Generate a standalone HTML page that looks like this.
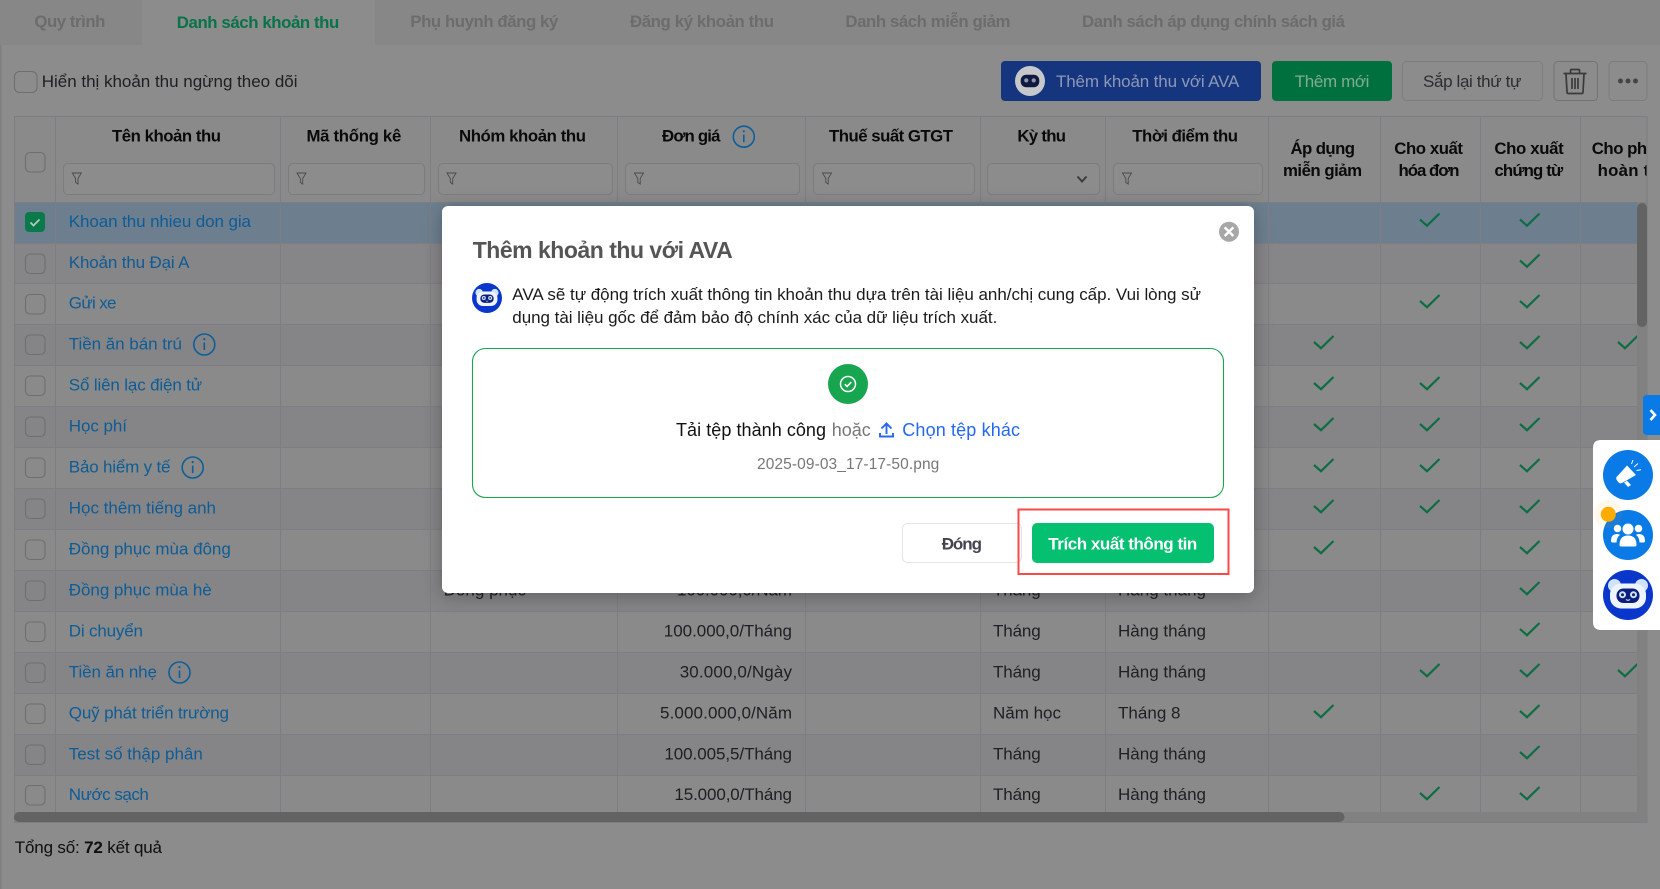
<!DOCTYPE html>
<html lang="vi">
<head>
<meta charset="utf-8">
<title>Danh sách khoản thu</title>
<style>
html,body{margin:0;padding:0;background:#8c8c8c;overflow:hidden}
svg{display:block}
text{font-family:"Liberation Sans","DejaVu Sans",sans-serif;font-size:17px;white-space:pre}
.tab{font-size:16.8px;font-weight:700;fill:#6c6c6c}
.h{font-size:16.8px;font-weight:700;fill:#0a0a0b}
.l{fill:#0e5c96}
.t{fill:#1f1f22}
.m{font-size:17px;fill:#1a1a1a}
.b{font-size:18px}
.grid rect{shape-rendering:crispEdges}
.in{fill:#8c8c8c;stroke:#7c7c7c}
.cb{fill:none;stroke:#6f6f70;stroke-width:1.1}
</style>
</head>
<body>
<svg width="1660" height="889" viewBox="0 0 1660 889">
<defs>
<g id="k"><path d="M-10 0l7 6.2L9.5-6" fill="none" stroke="#0c6e42" stroke-width="2.2"/></g>
<g id="cb"><rect x="0.5" y="0.5" width="19.5" height="19.5" rx="4.5" class="cb"/></g>
<g id="f"><path d="M-4.500-5.500h9l-3.300 5.500v5.500l-2.400-1.600v-3.900z" fill="none" stroke="#4a4a4a" stroke-width=".9"/></g>
<g id="i"><circle r="10.5" fill="none" stroke="#0c5f98" stroke-width="1.6"/><path d="M0-2v7.500" stroke="#0c5f98" stroke-width="1.600"/><circle cy="-5.400" r="1.100" fill="#0c5f98"/></g>
<g id="face">
<circle cx="-13.500" cy="-10" r="6.500" fill="#cfe3fb"/><circle cx="13.500" cy="-10" r="6.500" fill="#cfe3fb"/>
<rect x="-18" y="-12" width="36" height="25" rx="11" fill="#eef4fd"/>
<rect x="-11.500" y="-7" width="23" height="14.500" rx="7" fill="#0a1f7c"/>
<circle cx="-5.500" cy="-.8" r="3.500" fill="#cfe0f5"/><circle cx="5.500" cy="-.8" r="3.500" fill="#cfe0f5"/>
<circle cx="-5.500" cy="-.8" r="1.500" fill="#14246e"/><circle cx="5.500" cy="-.8" r="1.500" fill="#14246e"/>
<path d="M-2 4q2 1.500 4 0" stroke="#fff" fill="none"/>
</g>
<clipPath id="tc"><path d="M14 116H1647V202H1637V812H14Z"/></clipPath>
</defs>

<!-- page -->
<rect width="1660" height="889" fill="#8c8c8c"/>
<rect width="1.500" height="889" fill="#7f7f7f"/>
<rect width="1660" height="45" fill="#878787"/>
<rect x="142" width="233" height="45" fill="#8c8c8c"/>
<text class="tab" x="34.400" y="27" textLength="71">Quy trình</text>
<text class="tab" x="176.800" y="28" textLength="162.500" style="fill:#08734a">Danh sách khoản thu</text>
<text class="tab" x="410.300" y="27" textLength="148">Phụ huynh đăng ký</text>
<text class="tab" x="630" y="27" textLength="144">Đăng ký khoản thu</text>
<text class="tab" x="845.400" y="27" textLength="165">Danh sách miễn giảm</text>
<text class="tab" x="1082" y="27" textLength="263">Danh sách áp dụng chính sách giá</text>

<!-- toolbar -->
<rect x="14.500" y="71.500" width="22.500" height="21" rx="5" class="cb"/>
<text class="t" x="41.800" y="87" textLength="255.700">Hiển thị khoản thu ngừng theo dõi</text>
<rect x="1001" y="61" width="260" height="40" rx="4" fill="#15357f"/>
<circle cx="1030" cy="81" r="15" fill="#c6c8cb"/>
<g transform="translate(1030 81) scale(.62)"><rect x="-15" y="-10" width="30" height="20" rx="9" fill="#0f1a3e"/><circle cx="-6" cy="-1" r="3.400" fill="#8e97b0"/><circle cx="6" cy="-1" r="3.400" fill="#8e97b0"/></g>
<text x="1056" y="87" textLength="183.300" style="fill:#8d98b6">Thêm khoản thu với AVA</text>
<rect x="1272" y="61" width="120" height="40" rx="4" fill="#00703f"/>
<text x="1294.800" y="87" textLength="74.600" style="fill:#80ab96">Thêm mới</text>
<rect x="1402.500" y="61.500" width="140" height="39" rx="4" fill="#8c8c8c" stroke="#7d7d7d"/>
<text x="1423" y="87" textLength="98.400" style="fill:#2c2c32">Sắp lại thứ tự</text>
<rect x="1554" y="61.500" width="43.500" height="39" rx="4" fill="#8c8c8c" stroke="#737373"/>
<path d="M1563.500 73.500h23M1570.500 73v-2.500q0-1 1-1h7q1 0 1 1V73M1566 74l1 18q0 1.500 1.500 1.500h13q1.500 0 1.500-1.500l1-18M1572 78v11M1575 78v11M1578 78v11" fill="none" stroke="#3a3a3a" stroke-width="1.700"/>
<rect x="1609" y="61.500" width="38" height="39" rx="4" fill="#8c8c8c" stroke="#7d7d7d"/>
<circle cx="1620.500" cy="81" r="2.500" fill="#44444a"/><circle cx="1628" cy="81" r="2.500" fill="#44444a"/><circle cx="1635.500" cy="81" r="2.500" fill="#44444a"/>

<!-- table -->
<g clip-path="url(#tc)">
<g class="grid">
<rect x="14" y="116" width="1633" height="86" fill="#8a8a8a"/>
<rect x="14" y="202" width="1633" height="41" fill="#6d7f8e"/>
<rect x="14" y="243" width="1633" height="41" fill="#868587"/>
<rect x="14" y="284" width="1633" height="40" fill="#8a8a8a"/>
<rect x="14" y="324" width="1633" height="41" fill="#858588"/>
<rect x="14" y="365" width="1633" height="41" fill="#8a8a8a"/>
<rect x="14" y="406" width="1633" height="41" fill="#858588"/>
<rect x="14" y="447" width="1633" height="41" fill="#8a8a8a"/>
<rect x="14" y="488" width="1633" height="41" fill="#858588"/>
<rect x="14" y="529" width="1633" height="41" fill="#8a8a8a"/>
<rect x="14" y="570" width="1633" height="41" fill="#858588"/>
<rect x="14" y="611" width="1633" height="41" fill="#8a8a8a"/>
<rect x="14" y="652" width="1633" height="41" fill="#858588"/>
<rect x="14" y="693" width="1633" height="41" fill="#8a8a8a"/>
<rect x="14" y="734" width="1633" height="41" fill="#858588"/>
<rect x="14" y="775" width="1633" height="37" fill="#8a8a8a"/>
<g fill="#7d7d85">
<rect x="14" y="202" width="1633" height="1"/><rect x="14" y="243" width="1633" height="1"/><rect x="14" y="283" width="1633" height="1"/><rect x="14" y="324" width="1633" height="1"/><rect x="14" y="365" width="1633" height="1"/><rect x="14" y="406" width="1633" height="1"/><rect x="14" y="447" width="1633" height="1"/><rect x="14" y="488" width="1633" height="1"/><rect x="14" y="529" width="1633" height="1"/><rect x="14" y="570" width="1633" height="1"/><rect x="14" y="611" width="1633" height="1"/><rect x="14" y="652" width="1633" height="1"/><rect x="14" y="693" width="1633" height="1"/><rect x="14" y="734" width="1633" height="1"/><rect x="14" y="775" width="1633" height="1"/>
<rect x="55" y="116" width="1" height="696"/><rect x="280" y="116" width="1" height="696"/><rect x="430" y="116" width="1" height="696"/><rect x="617" y="116" width="1" height="696"/><rect x="805" y="116" width="1" height="696"/><rect x="980" y="116" width="1" height="696"/><rect x="1105" y="116" width="1" height="696"/><rect x="1268" y="116" width="1" height="696"/><rect x="1380" y="116" width="1" height="696"/><rect x="1480" y="116" width="1" height="696"/><rect x="1580" y="116" width="1" height="696"/>
</g>
</g>

<!-- header -->
<text class="h" x="112" y="141.500" textLength="109">Tên khoản thu</text>
<text class="h" x="306.500" y="141.500" textLength="94.800">Mã thống kê</text>
<text class="h" x="459" y="141.500" textLength="127">Nhóm khoản thu</text>
<text class="h" x="662" y="141.500" textLength="58.500">Đơn giá</text>
<use href="#i" x="743.800" y="136.700"/>
<text class="h" x="829" y="141.500" textLength="124">Thuế suất GTGT</text>
<text class="h" x="1017.400" y="141.500" textLength="48.600">Kỳ thu</text>
<text class="h" x="1132.300" y="141.500" textLength="105.700">Thời điểm thu</text>
<text class="h" x="1290.500" y="154" textLength="64.500">Áp dụng</text>
<text class="h" x="1283" y="176" textLength="79">miễn giảm</text>
<text class="h" x="1394.300" y="154" textLength="68.700">Cho xuất</text>
<text class="h" x="1398.500" y="176" textLength="61">hóa đơn</text>
<text class="h" x="1494.400" y="154" textLength="69.300">Cho xuất</text>
<text class="h" x="1494.400" y="176" textLength="68.800">chứng từ</text>
<text class="h" x="1591.800" y="154" textLength="74">Cho phép</text>
<text class="h" x="1597.600" y="176" textLength="68">hoàn trả</text>
<use href="#cb" x="25" y="152"/>

<rect class="in" x="63.500" y="163.500" width="211" height="31" rx="4.500"/>
<rect class="in" x="288.500" y="163.500" width="136" height="31" rx="4.500"/>
<rect class="in" x="438.500" y="163.500" width="174" height="31" rx="4.500"/>
<rect class="in" x="625.500" y="163.500" width="174" height="31" rx="4.500"/>
<rect class="in" x="813.500" y="163.500" width="161" height="31" rx="4.500"/>
<rect class="in" x="987.500" y="163.500" width="112" height="31" rx="4.500"/>
<rect class="in" x="1113.500" y="163.500" width="149" height="31" rx="4.500"/>
<use href="#f" x="76.800" y="178.500"/><use href="#f" x="301.500" y="178.500"/><use href="#f" x="451.500" y="178.500"/><use href="#f" x="639" y="178.500"/><use href="#f" x="827" y="178.500"/><use href="#f" x="1127" y="178.500"/>
<path d="M1077.500 176.500l4.500 5 4.500-5" fill="none" stroke="#3c3c3f" stroke-width="2"/>

<!-- row checkboxes -->
<rect x="25" y="212" width="20" height="20" rx="4" fill="#0a7a4a"/>
<path d="M30.500 222.500l3 3 6-6" fill="none" stroke="#b9c9c0" stroke-width="1.700"/>
<use href="#cb" x="25" y="253.500"/><use href="#cb" x="25" y="294"/><use href="#cb" x="25" y="334.500"/><use href="#cb" x="25" y="375.500"/><use href="#cb" x="25" y="416.500"/><use href="#cb" x="25" y="457.500"/><use href="#cb" x="25" y="498.500"/><use href="#cb" x="25" y="539.500"/><use href="#cb" x="25" y="580.500"/><use href="#cb" x="25" y="621.500"/><use href="#cb" x="25" y="662.500"/><use href="#cb" x="25" y="703.500"/><use href="#cb" x="25" y="744.500"/><use href="#cb" x="25" y="785"/>

<!-- names -->
<text class="l" x="68.800" y="227" textLength="182.200">Khoan thu nhieu don gia</text>
<text class="l" x="68.800" y="268" textLength="120.700">Khoản thu Đại A</text>
<text class="l" x="68.800" y="308.500" textLength="47.700">Gửi xe</text>
<text class="l" x="68.800" y="349.500" textLength="113.200">Tiền ăn bán trú</text>
<use href="#i" x="204.300" y="344.500"/>
<text class="l" x="68.800" y="390.500" textLength="133.400">Sổ liên lạc điện tử</text>
<text class="l" x="68.800" y="431.500" textLength="58.200">Học phí</text>
<text class="l" x="68.800" y="472.500" textLength="101.700">Bảo hiểm y tế</text>
<use href="#i" x="192.700" y="467.500"/>
<text class="l" x="68.800" y="513.500" textLength="147.200">Học thêm tiếng anh</text>
<text class="l" x="68.800" y="554.500" textLength="162">Đồng phục mùa đông</text>
<text class="l" x="68.800" y="595.500" textLength="142.900">Đồng phục mùa hè</text>
<text class="l" x="68.800" y="636.500" textLength="74.200">Di chuyển</text>
<text class="l" x="68.800" y="677.500" textLength="88.200">Tiền ăn nhẹ</text>
<use href="#i" x="179.500" y="672.500"/>
<text class="l" x="68.800" y="718.500" textLength="160.200">Quỹ phát triển trường</text>
<text class="l" x="68.800" y="759.500" textLength="134">Test số thập phân</text>
<text class="l" x="68.800" y="800" textLength="80">Nước sạch</text>

<!-- values -->
<text class="t" x="443.600" y="595.500" textLength="82.400">Đồng phục</text>
<text class="t" x="677" y="595.500" textLength="115">100.000,0/Năm</text>
<text class="t" x="993" y="595.500" textLength="47.700">Tháng</text>
<text class="t" x="1118" y="595.500" textLength="88">Hàng tháng</text>
<text class="t" x="663.800" y="636.500" textLength="128.200">100.000,0/Tháng</text>
<text class="t" x="993" y="636.500" textLength="47.700">Tháng</text>
<text class="t" x="1118" y="636.500" textLength="88">Hàng tháng</text>
<text class="t" x="679.700" y="677.500" textLength="112.300">30.000,0/Ngày</text>
<text class="t" x="993" y="677.500" textLength="47.700">Tháng</text>
<text class="t" x="1118" y="677.500" textLength="88">Hàng tháng</text>
<text class="t" x="660" y="718.500" textLength="132">5.000.000,0/Năm</text>
<text class="t" x="993" y="718.500" textLength="68">Năm học</text>
<text class="t" x="1118" y="718.500" textLength="62.500">Tháng 8</text>
<text class="t" x="664.400" y="759.500" textLength="127.600">100.005,5/Tháng</text>
<text class="t" x="993" y="759.500" textLength="47.700">Tháng</text>
<text class="t" x="1118" y="759.500" textLength="88">Hàng tháng</text>
<text class="t" x="674.400" y="800" textLength="117.600">15.000,0/Tháng</text>
<text class="t" x="993" y="800" textLength="47.700">Tháng</text>
<text class="t" x="1118" y="800" textLength="88">Hàng tháng</text>

<!-- checks -->
<use href="#k" x="1430" y="219.500"/><use href="#k" x="1530" y="219.500"/>
<use href="#k" x="1530" y="260.500"/>
<use href="#k" x="1430" y="301"/><use href="#k" x="1530" y="301"/>
<use href="#k" x="1324" y="342"/><use href="#k" x="1530" y="342"/><use href="#k" x="1628" y="342"/>
<use href="#k" x="1324" y="383"/><use href="#k" x="1430" y="383"/><use href="#k" x="1530" y="383"/>
<use href="#k" x="1324" y="424"/><use href="#k" x="1430" y="424"/><use href="#k" x="1530" y="424"/>
<use href="#k" x="1324" y="465"/><use href="#k" x="1430" y="465"/><use href="#k" x="1530" y="465"/>
<use href="#k" x="1324" y="506"/><use href="#k" x="1430" y="506"/><use href="#k" x="1530" y="506"/>
<use href="#k" x="1324" y="547"/><use href="#k" x="1530" y="547"/>
<use href="#k" x="1530" y="588"/>
<use href="#k" x="1530" y="629"/>
<use href="#k" x="1430" y="670"/><use href="#k" x="1530" y="670"/><use href="#k" x="1628" y="670"/>
<use href="#k" x="1324" y="711"/><use href="#k" x="1530" y="711"/>
<use href="#k" x="1530" y="752"/>
<use href="#k" x="1430" y="793"/><use href="#k" x="1530" y="793"/>
</g>

<!-- table frame + scrollbars -->
<rect x="14.500" y="116.500" width="1632.500" height="706" fill="none" stroke="#7d7d82" style="shape-rendering:crispEdges"/>
<rect x="1637" y="202" width="10" height="610" fill="#818181"/>
<rect x="1637" y="203" width="10" height="124" rx="5" fill="#636363"/>
<rect x="14" y="812" width="1633" height="10" fill="#818181"/>
<rect x="14" y="812" width="1330.500" height="10" rx="5" fill="#636363"/>

<text class="t" x="14.800" y="853" style="fill:#0e0e0e" textLength="147.200">Tổng số: <tspan font-weight="700">72</tspan> kết quả</text>

<!-- modal -->
<rect x="442" y="206" width="812" height="387" rx="6" fill="#fff" style="filter:drop-shadow(0 3px 9px rgba(0,0,0,.28))"/>
<text x="472.700" y="258" textLength="260" style="font-size:23px;font-weight:700;fill:#555">Thêm khoản thu với AVA</text>
<circle cx="1229" cy="231.700" r="10" fill="#a7a7a7"/>
<path d="M1224.700 227.400l8.600 8.600m0-8.600l-8.600 8.600" stroke="#fff" stroke-width="2.400"/>

<circle cx="487" cy="298" r="15" fill="#0a36cc"/>
<use href="#face" transform="translate(487 298.500) scale(.58)"/>
<text class="m" x="512.300" y="300" textLength="688.700">AVA sẽ tự động trích xuất thông tin khoản thu dựa trên tài liệu anh/chị cung cấp. Vui lòng sử</text>
<text class="m" x="512.300" y="323" textLength="485">dụng tài liệu gốc để đảm bảo độ chính xác của dữ liệu trích xuất.</text>

<rect x="472.500" y="348.500" width="751" height="149" rx="13" fill="#fff" stroke="#1aa350" stroke-width="1.100"/>
<circle cx="848" cy="384" r="20" fill="#17a64f"/>
<circle cx="848" cy="384" r="7.500" fill="none" stroke="#fff" stroke-width="1.500"/>
<path d="M844.800 384.200l2.300 2.300 4.200-4.500" fill="none" stroke="#fff" stroke-width="1.600"/>
<text class="m b" x="676" y="436" textLength="150" style="fill:#111">Tải tệp thành công</text>
<text class="m b" x="831.700" y="436" textLength="39" style="fill:#777">hoặc</text>
<path d="M886.500 424v10M881.500 428.500l5-5 5 5M880 433v3.500h13V433" fill="none" stroke="#2468f0" stroke-width="1.900"/>
<text class="m b" x="902.300" y="436" textLength="117.700" style="fill:#2468f0">Chọn tệp khác</text>
<text x="757" y="469" textLength="182.300" style="font-size:15.500px;fill:#777">2025-09-03_17-17-50.png</text>

<rect x="902.500" y="523.500" width="119" height="39" rx="5" fill="#fff" stroke="#e5e5e8"/>
<text x="941.700" y="549.500" textLength="40.300" style="font-weight:700;fill:#44444f">Đóng</text>
<rect x="1032" y="523" width="182" height="40" rx="5" fill="#04c070"/>
<text x="1048.300" y="549.500" textLength="149" style="font-weight:700;fill:#fff">Trích xuất thông tin</text>
<rect x="1018.500" y="509.500" width="210" height="64.500" fill="none" stroke="#f94a4a" stroke-width="2"/>

<!-- side widgets -->
<path d="M1660 395h-13q-4 0-4 4v32q0 4 4 4h13z" fill="#0a7ae6"/>
<path d="M1650.500 410l4.500 5-4.500 5" fill="none" stroke="#fff" stroke-width="2.600"/>
<path d="M1660 440h-59q-8 0-8 8v174q0 8 8 8h59z" fill="#fff"/>
<circle cx="1628" cy="475" r="25" fill="#0a7ae6"/>
<path d="M1627 465.500L1636 475 1622 483Q1619.500 484 1618 482L1616.500 479.500Q1615.500 477.500 1617.500 476Z" fill="#fff"/>
<path d="M1624 482.500L1627 480.800 1631 485 1628 487Z" fill="#fff"/>
<path d="M1631.500 464l1.500-4M1634 467l4-3.500M1636.500 470.500l4.500-.8" stroke="#fff" stroke-width="1"/>
<circle cx="1628" cy="535" r="25" fill="#0a7ae6"/>
<circle cx="1628" cy="529" r="5.500" fill="#fff"/><circle cx="1617.500" cy="528.500" r="3.800" fill="#fff"/><circle cx="1638.500" cy="528.500" r="3.800" fill="#fff"/>
<path d="M1619.500 545q0-9.500 8.500-9.500t8.500 9.500q0 1.500-1.500 1.500h-14q-1.500 0-1.500-1.500z" fill="#fff"/>
<path d="M1616.500 542.500h-4q-1.500 0-1.500-1.500 0-7 6-7 2 0 3 .8-3.500 3-3.500 7.700zM1639.500 542.500h4q1.500 0 1.500-1.500 0-7-6-7-2 0-3 .8 3.500 3 3.500 7.700z" fill="#fff"/>
<circle cx="1608.300" cy="514.300" r="14" fill="#ffab00" fill-opacity=".08"/>
<circle cx="1608.300" cy="514.300" r="7.500" fill="#ffab00"/>
<circle cx="1628" cy="595" r="25" fill="#0a36cc"/>
<use href="#face" transform="translate(1628 595.500)"/>
</svg>
</body>
</html>
